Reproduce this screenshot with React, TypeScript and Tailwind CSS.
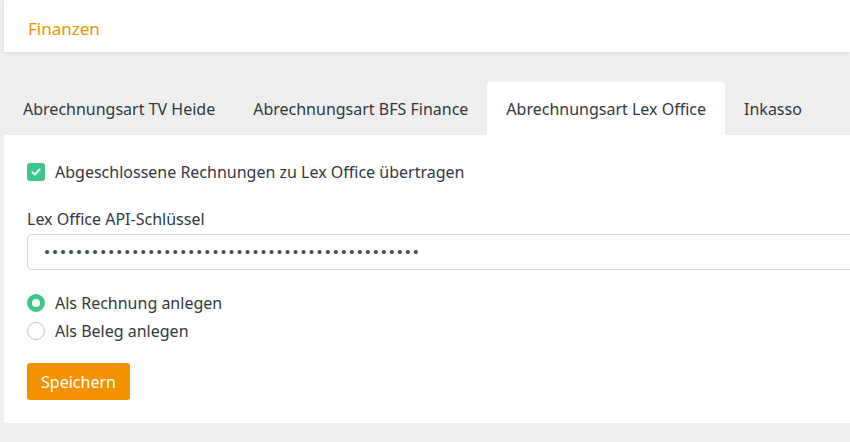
import { useState } from 'react';

const tabs = [
    'Abrechnungsart TV Heide',
    'Abrechnungsart BFS Finance',
    'Abrechnungsart Lex Office',
    'Inkasso',
];

export default function App() {
    const [active, setActive] = useState(2);
    const [transfer, setTransfer] = useState(true);
    const [mode, setMode] = useState<'rechnung' | 'beleg'>('rechnung');

    return (
        <div
            className="min-h-screen bg-[#eeeeee] pl-[4px] text-[16px] text-[#2f3840] overflow-hidden"
            style={{ fontFamily: '"Noto Sans", "Open Sans", sans-serif' }}
        >
            {/* Header */}
            <header className="h-[52px] bg-white flex items-center pl-[24px] pt-[5px] shadow-[0_1px_3px_rgba(0,0,0,0.08)]">
                <h1 className="text-[17px] text-[#f39200]">Finanzen</h1>
            </header>

            {/* Tabs */}
            <nav className="mt-[30px] h-[53px] flex">
                {tabs.map((t, i) => (
                    <button
                        key={t}
                        onClick={() => setActive(i)}
                        className={
                            i === active
                                ? 'px-[19px] h-full bg-white rounded-t-[3px]'
                                : 'px-[19px] h-full'
                        }
                    >
                        {t}
                    </button>
                ))}
            </nav>

            {/* Content */}
            <section className="bg-white pl-[23px] pt-[27px] pb-[23px] w-[900px] rounded-bl-[3px]">
                <label className="flex items-center h-[20px] gap-[10px] cursor-pointer">
                    <span
                        onClick={() => setTransfer(!transfer)}
                        className={
                            transfer
                                ? 'w-[18px] h-[18px] rounded-[3px] bg-[#3cc68a] flex items-center justify-center'
                                : 'w-[18px] h-[18px] rounded-[3px] border border-[#c8c8c8] bg-white'
                        }
                    >
                        {transfer && (
                            <svg width="10" height="10" viewBox="0 0 10 10">
                                <path d="M1.5 5.2 L4 7.5 L8.5 2.5" fill="none" stroke="white" strokeWidth="2" strokeLinecap="round" strokeLinejoin="round" />
                            </svg>
                        )}
                    </span>
                    <span>Abgeschlossene Rechnungen zu Lex Office übertragen</span>
                </label>

                <div className="mt-[27px] h-[20px] leading-[20px]">Lex Office API-Schlüssel</div>
                <input
                    type="password"
                    readOnly
                    value="abcdefghijklmnopqrstuvwxyzabcdefghijklmnopqrstu"
                    className="mt-[5px] block w-[860px] h-[36px] border border-[#d6d6d6] rounded-[4px] px-[15px] text-[13.6px] text-[#4a5056] outline-none"
                    style={{ fontFamily: '"DejaVu Sans", sans-serif' }}
                />

                <div className="mt-[23px] flex flex-col gap-[8px]">
                    {[
                        { id: 'rechnung' as const, label: 'Als Rechnung anlegen' },
                        { id: 'beleg' as const, label: 'Als Beleg anlegen' },
                    ].map((r) => (
                        <label key={r.id} className="flex items-center h-[20px] gap-[10px] cursor-pointer" onClick={() => setMode(r.id)}>
                            <span
                                className={
                                    mode === r.id
                                        ? 'w-[18px] h-[18px] rounded-full border-[5px] border-[#3cc68a] bg-white'
                                        : 'w-[18px] h-[18px] rounded-full border border-[#c4c4c4] bg-white'
                                }
                            />
                            <span>{r.label}</span>
                        </label>
                    ))}
                </div>

                <button className="mt-[22px] h-[37px] w-[103px] bg-[#f39200] rounded-[3px] text-white text-[16px]">
                    Speichern
                </button>
            </section>
        </div>
    );
}
